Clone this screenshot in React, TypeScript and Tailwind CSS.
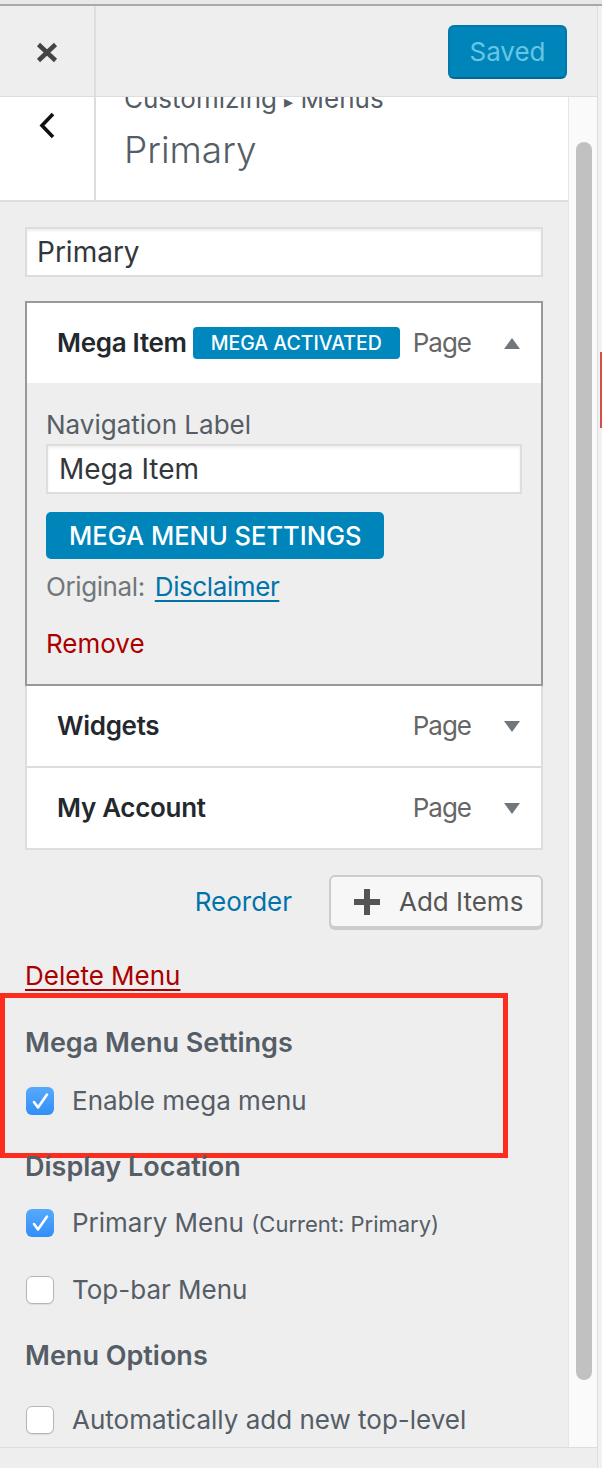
import React from 'react';

const Caret = ({ up }: { up?: boolean }) => (
  <svg width="16" height="11" viewBox="0 0 16 11" className="text-[#72777c]">
    <path d={up ? 'M8 0 L16 11 L0 11 Z' : 'M0 0 L16 0 L8 11 Z'} fill="currentColor" />
  </svg>
);

const Checkbox = ({ on }: { on?: boolean }) =>
  on ? (
    <span className="flex h-[28px] w-[28px] shrink-0 items-center justify-center rounded-[6px] bg-gradient-to-b from-[#58a9fb] to-[#2f8ff7]">
      <svg width="28" height="28" viewBox="0 0 28 28">
        <path d="M8 15 L12 20.5 L21 7.5" fill="none" stroke="white" strokeWidth="2.6" strokeLinecap="round" strokeLinejoin="round" />
      </svg>
    </span>
  ) : (
    <span className="h-[28px] w-[28px] shrink-0 rounded-[6px] border border-[#b5b5b5] bg-white shadow-[0_1px_1px_rgba(0,0,0,0.08)]" />
  );

const CheckRow = ({ on, children, className = '' }: { on?: boolean; children: React.ReactNode; className?: string }) => (
  <div className={`flex h-[32px] items-center pl-[1px] ${className}`}>
    <Checkbox on={on} />
    <span className="ml-[18px] text-[26px] leading-[32px]">{children}</span>
  </div>
);

const ItemRow = ({ title }: { title: string }) => (
  <div className="flex h-[82px] items-center border-2 border-t-0 border-[#ddd] bg-white pl-[30px] pr-[21px]">
    <span className="text-[26px] font-semibold leading-[32px] tracking-[-0.3px] text-[#23282d]">{title}</span>
    <div className="ml-auto flex items-center">
      <span className="text-[26px] leading-[32px] tracking-[-1px] text-[#666]">Page</span>
      <span className="ml-[33px]">
        <Caret />
      </span>
    </div>
  </div>
);

export default function App() {
  return (
    <div className="flex h-[1468px] w-[602px] flex-col overflow-hidden bg-[#eee] font-['Inter','Liberation_Sans',sans-serif] text-[#555d66]">
      <div className="h-[4px] shrink-0 bg-[#e8e8e8]" />
      <div className="h-[2px] shrink-0 bg-[#a9a9a9]" />
      <div className="flex min-h-0 flex-1">
        <div className="flex w-[598px] flex-col border-r border-[#ddd]">
          {/* Header */}
          <div className="flex h-[91px] shrink-0 border-b border-[#ddd] bg-[#eee]">
            <div className="flex h-full w-[96px] items-center justify-center border-r-2 border-[#ddd] pt-[2px]">
              <svg width="22" height="21" viewBox="0 0 22 21">
                <path d="M2.5 2.5 L19.5 18.5 M19.5 2.5 L2.5 18.5" stroke="#444" strokeWidth="4.5" />
              </svg>
            </div>
            <button className="ml-auto mr-[30px] mt-[19px] flex h-[54px] w-[119px] items-center justify-center rounded-[6px] border-2 border-[#0079aa] border-b-[#006799] bg-[#0085ba] text-[26px] leading-[32px] text-[#66c6e4]">
              Saved
            </button>
          </div>

          {/* Scrolling body */}
          <div className="flex h-[1350px] shrink-0">
            <div className="w-[568px] overflow-hidden">
              <div className="-mt-[30px]">
                <div className="flex h-[135px] border-b-2 border-[#ddd] bg-white">
                  <div className="flex w-[96px] justify-center border-r-2 border-[#ddd] pt-[45px]">
                    <svg width="18" height="27" viewBox="0 0 18 27">
                      <path d="M15 2 L4 13.5 L15 25" fill="none" stroke="#111" strokeWidth="3.6" />
                    </svg>
                  </div>
                  <div className="pl-[28px] pt-[17px]">
                    <div className="text-[26px] leading-[30px]">
                      Customizing <span className="text-[18px]">▸</span> Menus
                    </div>
                    <div className="mt-[10px] text-[37px] font-light leading-[46px]">Primary</div>
                  </div>
                </div>

                <div className="px-[25px] pt-[25px]">
                  <div className="flex h-[50px] items-center border-2 border-[#ddd] bg-white pl-[10px] text-[28px] leading-[34px] text-[#32373c] shadow-[inset_0_2px_3px_rgba(0,0,0,0.07)]">
                    Primary
                  </div>

                  {/* Menu items */}
                  <div className="mt-[24px]">
                    <div className="border-2 border-[#999]">
                      <div className="flex h-[80px] items-center bg-white pl-[30px] pr-[21px]">
                        <span className="text-[26px] font-semibold leading-[32px] tracking-[-0.3px] text-[#23282d]">Mega Item</span>
                        <span className="ml-[6px] flex h-[32px] items-center rounded-[4px] bg-[#0087be] px-[18px] text-[19.5px] font-medium leading-[24px] text-white">
                          MEGA ACTIVATED
                        </span>
                        <div className="ml-auto flex items-center">
                          <span className="text-[26px] leading-[32px] tracking-[-1px] text-[#666]">Page</span>
                          <span className="ml-[33px]">
                            <Caret up />
                          </span>
                        </div>
                      </div>
                      <div className="bg-[#eee] px-[19px] pb-[24px] pt-[26px]">
                        <div className="text-[26px] leading-[32px]">Navigation Label</div>
                        <div className="mt-[3px] flex h-[50px] items-center border-2 border-[#ddd] bg-white pl-[11px] text-[28px] leading-[34px] text-[#32373c] shadow-[inset_0_2px_3px_rgba(0,0,0,0.07)]">
                          Mega Item
                        </div>
                        <button className="mt-[18px] flex h-[47px] items-center rounded-[5px] bg-[#0085ba] px-[23px] text-[25.5px] font-medium leading-[30px] text-white">
                          MEGA MENU SETTINGS
                        </button>
                        <div className="mt-[12px] text-[26px] leading-[32px] tracking-[-0.4px] text-[#72777c]">
                          Original:
                          <a className="ml-[10px] text-[#0073aa] underline underline-offset-[4px]">Disclaimer</a>
                        </div>
                        <div className="mt-[25px] text-[26px] leading-[32px] text-[#a00]">Remove</div>
                      </div>
                    </div>
                    <ItemRow title="Widgets" />
                    <ItemRow title="My Account" />
                  </div>

                  {/* Actions */}
                  <div className="mt-[25px] flex items-center justify-end">
                    <a className="mr-[37px] text-[26px] leading-[32px] text-[#0073aa]">Reorder</a>
                    <button className="flex h-[53px] w-[214px] items-center rounded-[6px] border-2 border-[#ccc] bg-[#f7f7f7] pl-[23px] text-[26px] leading-[32px] text-[#555] shadow-[0_2px_0_#ccc]">
                      <svg width="26" height="26" viewBox="0 0 26 26">
                        <path d="M10 0 H16 V10 H26 V16 H16 V26 H10 V16 H0 V10 H10 Z" fill="#555" />
                      </svg>
                      <span className="ml-[19px]">Add Items</span>
                    </button>
                  </div>

                  <div className="mt-[32px] text-[26px] leading-[32px]">
                    <a className="text-[#a00] underline underline-offset-[4px]">Delete Menu</a>
                  </div>

                  {/* Highlighted section */}
                  <div className="-ml-[25px] mt-[1px] w-[508px] border-[5px] border-[#fc2c1f] pb-[36px] pl-[20px] pt-[28px]">
                    <div className="text-[27px] font-semibold leading-[34px]">Mega Menu Settings</div>
                    <CheckRow on className="mt-[25px]">
                      Enable mega menu
                    </CheckRow>
                  </div>

                  <div className="-mt-[8px] text-[27px] font-semibold leading-[34px]">Display Location</div>
                  <CheckRow on className="mt-[23px]">
                    Primary Menu <span className="text-[22px]">(Current: Primary)</span>
                  </CheckRow>
                  <CheckRow className="mt-[35px]">Top-bar Menu</CheckRow>

                  <div className="mt-[33px] text-[27px] font-semibold leading-[34px]">Menu Options</div>
                  <CheckRow className="mt-[31px]">Automatically add new top-level</CheckRow>
                  <div className="h-[60px]" />
                </div>
              </div>
            </div>

            {/* Scrollbar */}
            <div className="flex w-[29px] flex-col border-l border-[#e6e6e6] bg-[#fafafa] pb-[67px] pl-[7px] pr-[5px] pt-[45px]">
              <div className="flex-1 rounded-full bg-[#c1c1c1]" />
            </div>
          </div>

          <div className="flex-1 border-t border-[#ddd] bg-[#eee]" />
        </div>
        <div className="flex flex-1 flex-col bg-[#f1f1f1] pt-[346px]">
          <div className="ml-auto h-[76px] w-[2px] bg-[#d54e4e]" />
        </div>
      </div>
    </div>
  );
}
